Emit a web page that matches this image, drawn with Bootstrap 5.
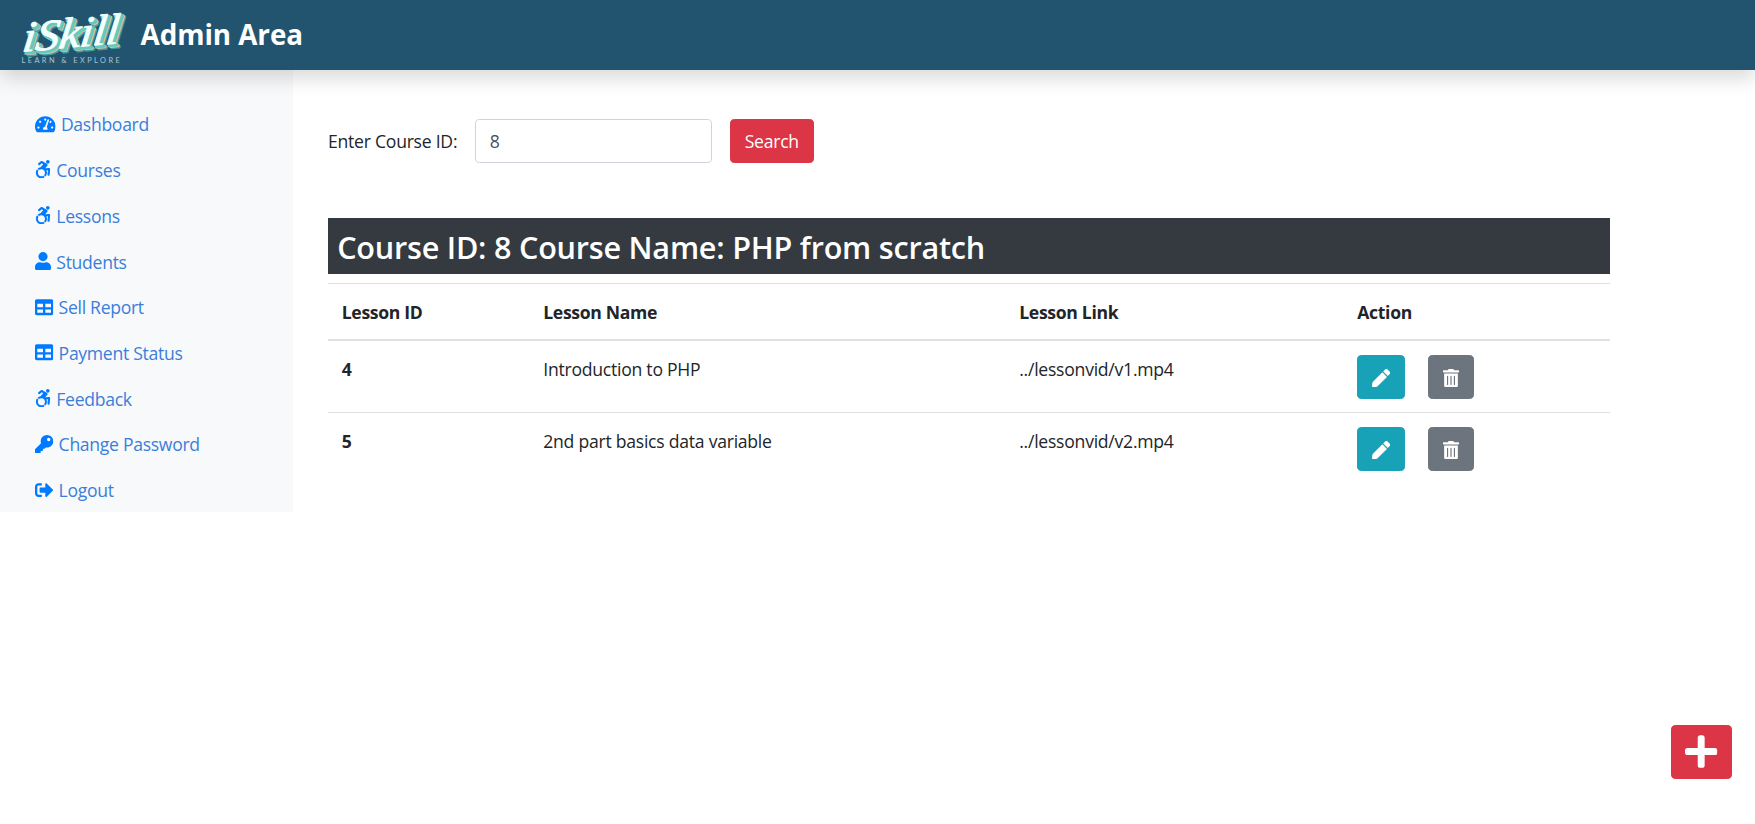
<!DOCTYPE html>
<html lang="en">
<head>
<meta charset="utf-8">
<meta name="viewport" content="width=device-width, initial-scale=1">
<title>Lessons</title>
<link href="https://cdn.jsdelivr.net/npm/bootstrap@5.3.0/dist/css/bootstrap.min.css" rel="stylesheet">
<style>
  html { font-size: 18.3px; }
  body { font-family: "Open Sans", "Noto Sans", sans-serif; font-size: 17.6px; color: #212529; line-height: 27.45px; letter-spacing: -.25px; overflow: hidden; }
  .topbar { height: 70px; background: #225470; box-shadow: 0 .5rem 1rem rgba(0,0,0,.15); padding: 0 0 0 20px; position: relative; z-index: 2; }
  .logo { width: 112px; height: 64px; }
  .brand-title { font: 700 27.8px/1 "Open Sans", sans-serif; color: #fff; margin-left: 8.500px; letter-spacing: -.05px; }
  .sidebar { width: 292.5px; background: #f8f9fa; height: 442px; padding: 31px 0 0 17px; }
  .sidebar .nav-link { color: #3a7edb; font-size: inherit; letter-spacing: -.3px; padding: .5rem 1rem; display: flex; align-items: center; }
  .sidebar .nav-link span { padding-top: 1.2px; margin-bottom: -1.2px; }
  .ico { height: 1rem; width: auto; fill: currentColor; flex: none; }
  .sidebar .ico { fill: #007bff; margin-right: 5px; }
  .content-area { width: 1317px; padding: 49px 0 0 35.5px; }
  .course-label { width: 129px; white-space: nowrap; padding-top: 2px; }
  .search-input { width: 237px; height: 44px; font-size: 17.6px; border-color: #ced4da; border-radius: .25rem; color: #495057; padding: .375rem .75rem; margin: 0 18px; background: #fff; }
  .btn { border-radius: .25rem; height: 44px; font-size: 17.6px; padding: .375rem .75rem; letter-spacing: inherit; }
  .btn-danger { background: #dc3545; border-color: #dc3545; }
  .search-btn { width: 83.5px; padding: 0; }
  .course-bar { background: #343a40; color: #fff; margin: 54.500px 0 9px; padding: 10px .5rem 0; font-size: 30.6px; font-weight: 600; line-height: 38.4px; height: 56.5px; letter-spacing: -.22px; }
  .lessons { table-layout: fixed; margin: 0; color: #212529; }
  .lessons > :not(caption) > * > * { padding: .75rem; border-width: 1px 0 0; border-top: 1px solid #dee2e6; vertical-align: top; box-shadow: none; line-height: 29px; }
  .lessons > thead > tr > th { border-bottom: 2px solid #dee2e6; padding-top: 13.900px; padding-bottom: 12px; }
  .lessons > tbody > tr:first-child > * { border-top-width: 0; padding-top: 14.2px; padding-bottom: 13.2px; }
  .lessons th { font-weight: 700; letter-spacing: -.32px; }
  .btn-edit { background: #17a2b8; border-color: #17a2b8; color: #fff; width: 48px; margin-right: 23.200px; }
  .btn-del { background: #6c757d; border-color: #6c757d; color: #fff; width: 46px; }
  .icon-btn { display: inline-flex; align-items: center; justify-content: center; padding: 0; }
  .icon-btn .ico { position: relative; top: 1px; }
  .add-btn { position: fixed; right: 23px; bottom: 45px; width: 61px; height: 54px; padding: 0 0 3px; }
  .add-btn .ico { height: 37px; }
</style>
</head>
<body>
<svg class="d-none">
  <symbol id="i-dash" viewBox="0 0 576 512"><path d="M288 32C128.940 32 0 160.940 0 320c0 52.800 14.250 102.260 39.060 144.800 5.610 9.620 16.300 15.200 27.440 15.200h443c11.140 0 21.830-5.580 27.440-15.200C561.750 422.260 576 372.800 576 320c0-159.060-128.940-288-288-288zm0 64c14.710 0 26.580 10.130 30.320 23.650-1.110 2.260-2.640 4.230-3.450 6.670l-9.220 27.670c-5.130 3.490-10.970 6.010-17.640 6.010-17.670 0-32-14.330-32-32S270.330 96 288 96zM96 384c-17.670 0-32-14.330-32-32s14.330-32 32-32 32 14.330 32 32-14.330 32-32 32zm48-160c-17.670 0-32-14.330-32-32s14.330-32 32-32 32 14.330 32 32-14.330 32-32 32zm246.770-72.410l-61.330 184C343.130 347.330 352 364.540 352 384c0 11.720-3.380 22.550-8.880 32H232.880c-5.500-9.450-8.880-20.280-8.880-32 0-33.940 26.500-61.430 59.900-63.590l61.340-184.010c4.170-12.560 17.730-19.450 30.360-15.170 12.570 4.190 19.350 17.790 15.170 30.360zm14.660 57.200l15.520-46.550c3.470-1.290 7.130-2.230 11.050-2.230 17.670 0 32 14.330 32 32s-14.330 32-32 32c-11.380-.01-20.890-6.280-26.570-15.220zM480 384c-17.670 0-32-14.330-32-32s14.330-32 32-32 32 14.330 32 32-14.330 32-32 32z"/></symbol>
  <symbol id="i-acc" viewBox="0 0 448 512"><path d="M423.9 255.800L411 413.100c-3.300 40.700-63.900 35.100-60.600-4.900l10-122.500-41.100 2.300c10.100 20.700 15.800 43.900 15.800 68.500 0 41.200-16.100 78.700-42.300 106.500l-39.300-39.300c57.900-63.700 13.100-167.200-74-167.200-25.900 0-49.500 9.900-67.200 26L73 243.200c22-20.700 50.100-35.100 81.400-40.200l75.300-85.700-42.600-24.800-51.600 46c-30 26.800-70.600-18.500-40.500-45.400l68-60.700c9.800-8.800 24.100-10.200 35.500-3.600 0 0 139.300 80.900 139.500 81.100 16.200 10.100 20.700 36 6.100 52.600L285.700 229l106.100-5.900c18.500-1.100 33.600 14.400 32.100 32.700zm-64.900-154c28.100 0 50.900-22.800 50.900-50.900C409.900 22.800 387.100 0 359 0c-28.100 0-50.900 22.800-50.900 50.900 0 28.100 22.800 50.900 50.900 50.900zM179.600 456.500c-80.600 0-127.400-90.600-82.700-156.100l-39.700-39.700C36.400 287 24 320.300 24 356.400c0 130.700 150.700 201.400 251.400 122.500l-39.700-39.700c-16 10.900-35.300 17.300-56.100 17.300z"/></symbol>
  <symbol id="i-user" viewBox="0 0 448 512"><path d="M224 256c70.700 0 128-57.300 128-128S294.700 0 224 0 96 57.300 96 128s57.300 128 128 128zm89.600 32h-16.700c-22.200 10.200-46.900 16-72.900 16s-50.600-5.800-72.900-16h-16.700C60.200 288 0 348.200 0 422.400V464c0 26.500 21.500 48 48 48h352c26.500 0 48-21.500 48-48v-41.600c0-74.200-60.200-134.400-134.400-134.400z"/></symbol>
  <symbol id="i-table" viewBox="0 0 512 512"><path d="M464 32H48C21.490 32 0 53.490 0 80v352c0 26.510 21.490 48 48 48h416c26.510 0 48-21.490 48-48V80c0-26.510-21.490-48-48-48zM224 416H64v-96h160v96zm0-160H64v-96h160v96zm224 160H288v-96h160v96zm0-160H288v-96h160v96z"/></symbol>
  <symbol id="i-key" viewBox="0 0 512 512"><path d="M512 176.001C512 273.203 433.202 352 336 352c-11.220 0-22.190-1.062-32.827-3.069l-24.012 27.014A23.999 23.999 0 0 1 261.223 384H224v40c0 13.255-10.745 24-24 24h-40v40c0 13.255-10.745 24-24 24H24c-13.255 0-24-10.745-24-24v-78.059c0-6.365 2.529-12.470 7.029-16.971l161.802-161.802C163.108 213.814 160 195.271 160 176 160 78.798 238.797.001 335.999 0 433.488-.001 512 78.511 512 176.001zM336 128c0 26.510 21.490 48 48 48s48-21.490 48-48-21.490-48-48-48-48 21.490-48 48z"/></symbol>
  <symbol id="i-out" viewBox="0 0 512 512"><path d="M497 273L329 441c-15 15-41 4.500-41-17v-96H152c-13.300 0-24-10.700-24-24v-96c0-13.300 10.700-24 24-24h136V88c0-21.400 25.900-32 41-17l168 168c9.300 9.400 9.300 24.600 0 34zM192 436v-40c0-6.600-5.400-12-12-12H96c-17.700 0-32-14.300-32-32V160c0-17.700 14.300-32 32-32h84c6.600 0 12-5.400 12-12V76c0-6.600-5.400-12-12-12H96c-53 0-96 43-96 96v192c0 53 43 96 96 96h84c6.600 0 12-5.400 12-12z"/></symbol>
  <symbol id="i-pen" viewBox="0 0 512 512"><path d="M290.740 93.240l128.020 128.020-277.990 277.990-114.140 12.600C11.350 513.540-1.560 500.620.140 485.340l12.700-114.220 277.900-277.880zm207.200-19.060l-60.110-60.110c-18.750-18.750-49.160-18.750-67.910 0l-56.550 56.550 128.020 128.020 56.550-56.550c18.750-18.760 18.750-49.160 0-67.910z"/></symbol>
  <symbol id="i-trash" viewBox="0 0 448 512"><path d="M32 464a48 48 0 0 0 48 48h288a48 48 0 0 0 48-48V128H32zm272-256a16 16 0 0 1 32 0v224a16 16 0 0 1-32 0zm-96 0a16 16 0 0 1 32 0v224a16 16 0 0 1-32 0zm-96 0a16 16 0 0 1 32 0v224a16 16 0 0 1-32 0zM432 32H312l-9.400-18.700A24 24 0 0 0 281.100 0H166.800a23.720 23.720 0 0 0-21.400 13.300L136 32H16A16 16 0 0 0 0 48v32a16 16 0 0 0 16 16h416a16 16 0 0 0 16-16V48a16 16 0 0 0-16-16z"/></symbol>
  <symbol id="i-plus" viewBox="0 0 448 512"><path d="M416 208H272V64c0-17.670-14.330-32-32-32h-32c-17.670 0-32 14.330-32 32v144H32c-17.670 0-32 14.330-32 32v32c0 17.670 14.330 32 32 32h144v144c0 17.670 14.330 32 32 32h32c17.670 0 32-14.330 32-32V304h144c17.670 0 32-14.330 32-32v-32c0-17.670-14.330-32-32-32z"/></symbol>
</svg>

<nav class="topbar d-flex align-items-center">
  <svg class="logo" viewBox="20 3 112 64">
    <g font-family="'Liberation Serif', serif" font-style="italic" font-size="43" stroke-linejoin="round" transform="rotate(-5 70 40) translate(70 40) skewX(-12) translate(-70 -40)">
      <text x="27" y="52" textLength="97" lengthAdjust="spacingAndGlyphs" fill="#3e9c9c" stroke="#3e9c9c" stroke-width="2">iSkill</text>
      <text x="25.500" y="50.500" textLength="97" lengthAdjust="spacingAndGlyphs" fill="#d3c4a2" stroke="#d3c4a2" stroke-width="2">iSkill</text>
      <text x="24" y="49.500" textLength="97" lengthAdjust="spacingAndGlyphs" fill="#66c8c0" stroke="#66c8c0" stroke-width="2.500">iSkill</text>
      <text x="22" y="47.500" textLength="97" lengthAdjust="spacingAndGlyphs" fill="#f2fffc" stroke="#f2fffc" stroke-width=".8">iSkill</text>
    </g>
    <text x="21.500" y="63" font-family="Lato, sans-serif" font-size="7.400" textLength="98" fill="#a9c4d2">LEARN &amp; EXPLORE</text>
  </svg>
  <span class="brand-title">Admin Area</span>
</nav>

<div class="d-flex align-items-start">
  <aside class="sidebar flex-shrink-0">
    <ul class="nav flex-column">
      <li class="nav-item"><a class="nav-link" href="#"><svg class="ico" viewBox="0 0 576 512"><use href="#i-dash"/></svg><span>Dashboard</span></a></li>
      <li class="nav-item"><a class="nav-link" href="#"><svg class="ico" viewBox="0 0 448 512"><use href="#i-acc"/></svg><span>Courses</span></a></li>
      <li class="nav-item"><a class="nav-link" href="#"><svg class="ico" viewBox="0 0 448 512"><use href="#i-acc"/></svg><span>Lessons</span></a></li>
      <li class="nav-item"><a class="nav-link" href="#"><svg class="ico" viewBox="0 0 448 512"><use href="#i-user"/></svg><span>Students</span></a></li>
      <li class="nav-item"><a class="nav-link" href="#"><svg class="ico" viewBox="0 0 512 512"><use href="#i-table"/></svg><span>Sell Report</span></a></li>
      <li class="nav-item"><a class="nav-link" href="#"><svg class="ico" viewBox="0 0 512 512"><use href="#i-table"/></svg><span>Payment Status</span></a></li>
      <li class="nav-item"><a class="nav-link" href="#"><svg class="ico" viewBox="0 0 448 512"><use href="#i-acc"/></svg><span>Feedback</span></a></li>
      <li class="nav-item"><a class="nav-link" href="#"><svg class="ico" viewBox="0 0 512 512"><use href="#i-key"/></svg><span>Change Password</span></a></li>
      <li class="nav-item"><a class="nav-link" href="#"><svg class="ico" viewBox="0 0 512 512"><use href="#i-out"/></svg><span>Logout</span></a></li>
    </ul>
  </aside>

  <main class="content-area">
    <form class="d-flex align-items-center">
      <label for="cid" class="course-label">Enter Course ID:</label>
      <input id="cid" class="form-control search-input" value="8">
      <button type="button" class="btn btn-danger search-btn">Search</button>
    </form>
    <h3 class="course-bar">Course ID: 8 Course Name: PHP from scratch</h3>
    <table class="table lessons">
      <colgroup><col style="width:201.5px"><col style="width:476px"><col style="width:338px"><col></colgroup>
      <thead>
        <tr><th>Lesson ID</th><th>Lesson Name</th><th>Lesson Link</th><th>Action</th></tr>
      </thead>
      <tbody>
        <tr><th>4</th><td>Introduction to PHP</td><td>../lessonvid/v1.mp4</td>
          <td><div class="d-flex"><button class="btn icon-btn btn-edit" aria-label="Edit"><svg class="ico" viewBox="0 0 512 512"><use href="#i-pen"/></svg></button><button class="btn icon-btn btn-del" aria-label="Delete"><svg class="ico" viewBox="0 0 448 512"><use href="#i-trash"/></svg></button></div></td></tr>
        <tr><th>5</th><td>2nd part basics data variable</td><td>../lessonvid/v2.mp4</td>
          <td><div class="d-flex"><button class="btn icon-btn btn-edit" aria-label="Edit"><svg class="ico" viewBox="0 0 512 512"><use href="#i-pen"/></svg></button><button class="btn icon-btn btn-del" aria-label="Delete"><svg class="ico" viewBox="0 0 448 512"><use href="#i-trash"/></svg></button></div></td></tr>
      </tbody>
    </table>
  </main>
</div>
<a class="btn btn-danger icon-btn add-btn" href="#" aria-label="Add lesson"><svg class="ico" viewBox="0 0 448 512"><use href="#i-plus"/></svg></a>
<script src="https://cdn.jsdelivr.net/npm/bootstrap@5.3.0/dist/js/bootstrap.bundle.min.js"></script>
</body>
</html>
